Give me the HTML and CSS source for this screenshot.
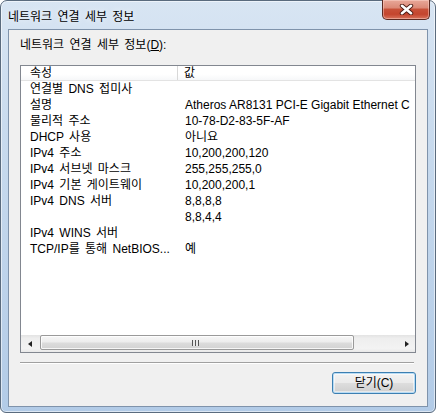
FILE: index.html
```html
<!DOCTYPE html>
<html lang="ko">
<head>
<meta charset="utf-8">
<title>네트워크 연결 세부 정보</title>
<link rel="stylesheet" href="styles.css">
</head>
<body>
<div class="window">
  <div class="titlebar">
    <span class="title">네트워크 연결 세부 정보</span>
    <div class="close-btn">
      <svg width="15" height="11" viewBox="0 0 15 11">
        <path d="M3 1.8 L12 9.2 M12 1.8 L3 9.2" stroke="#4a1a12" stroke-width="4.4" stroke-linecap="round" fill="none"/>
        <path d="M3 1.8 L12 9.2 M12 1.8 L3 9.2" stroke="#ffffff" stroke-width="2.6" stroke-linecap="round" fill="none"/>
      </svg>
    </div>
  </div>
  <div class="client">
    <div class="label">네트워크 연결 세부 정보(<u>D</u>):</div>
    <div class="listbox">
      <div class="lv-header">
        <div class="hcol hcol1">속성</div>
        <div class="hcol hcol2">값</div>
      </div>
      <div class="lv-body">
        <div class="row"><span class="c1">연결별 DNS 접미사</span><span class="c2"></span></div>
        <div class="row"><span class="c1">설명</span><span class="c2">Atheros AR8131 PCI-E Gigabit Ethernet C</span></div>
        <div class="row"><span class="c1">물리적 주소</span><span class="c2">10-78-D2-83-5F-AF</span></div>
        <div class="row"><span class="c1">DHCP 사용</span><span class="c2">아니요</span></div>
        <div class="row"><span class="c1">IPv4 주소</span><span class="c2">10,200,200,120</span></div>
        <div class="row"><span class="c1">IPv4 서브넷 마스크</span><span class="c2">255,255,255,0</span></div>
        <div class="row"><span class="c1">IPv4 기본 게이트웨이</span><span class="c2">10,200,200,1</span></div>
        <div class="row"><span class="c1">IPv4 DNS 서버</span><span class="c2">8,8,8,8</span></div>
        <div class="row"><span class="c1"></span><span class="c2">8,8,4,4</span></div>
        <div class="row"><span class="c1">IPv4 WINS 서버</span><span class="c2"></span></div>
        <div class="row"><span class="c1">TCP/IP를 통해 NetBIOS...</span><span class="c2">예</span></div>
      </div>
      <div class="hscroll">
        <div class="arrow-btn"><span class="tri tri-left"></span></div>
        <div class="track">
          <div class="thumb"><span class="grip"></span></div>
        </div>
        <div class="arrow-btn"><span class="tri tri-right"></span></div>
      </div>
    </div>
    <div class="separator"></div>
    <div class="button-row">
      <div class="btn">닫기(C)</div>
    </div>
  </div>
</div>
</body>
</html>
```

FILE: styles.css
```css
* { box-sizing: border-box; }
html, body { margin: 0; padding: 0; }
body {
  width: 436px;
  height: 413px;
  overflow: hidden;
  background: #ffffff;
  font-family: "Liberation Sans", "Noto Sans CJK KR", sans-serif;
  font-size: 12px;
  color: #000;
}

.window {
  width: 436px;
  height: 413px;
  border: 1px solid #5a6b7e;
  border-radius: 7px 7px 6px 6px;
  background: linear-gradient(to bottom, #d8e5f3 0%, #c9dbee 30%, #bcd2ea 70%, #b2cbe7 100%);
  box-shadow: inset 0 0 0 1px rgba(255, 255, 255, 0.55);
  padding: 0 7px 5px 7px;
  display: flex;
  flex-direction: column;
}

.titlebar {
  height: 28px;
  display: flex;
  align-items: flex-start;
}
.title {
  padding-top: 8px;
  line-height: 16px;
  font-size: 12px;
  word-spacing: 2px;
  color: #000;
  text-shadow: 0 0 6px rgba(255, 255, 255, 0.9);
}
.close-btn {
  margin-left: auto;
  margin-top: -1px;
  margin-right: -2px;
  width: 48px;
  height: 20px;
  border: 1px solid #5b2a22;
  border-top: none;
  border-radius: 0 0 5px 5px;
  background: linear-gradient(to bottom, #e8a899 0%, #dc8a78 40%, #c75038 50%, #c4452e 75%, #d8735c 100%);
  box-shadow: inset 0 0 0 1px rgba(255, 220, 210, 0.45);
  display: flex;
  align-items: center;
  justify-content: center;
}

.client {
  height: 378px;
  border: 1px solid #7f93ab;
  background: #f0f0f0;
  display: flex;
  flex-direction: column;
}

.label {
  margin: 7px 0 0 11px;
  line-height: 16px;
  height: 16px;
  word-spacing: 2px;
}
.label u { text-decoration: underline; text-underline-offset: 1px; }

.listbox {
  margin: 12px 0 0 11px;
  width: 396px;
  height: 288px;
  border: 1px solid #828790;
  background: #ffffff;
  display: flex;
  flex-direction: column;
  overflow: hidden;
}

.lv-header {
  height: 15px;
  flex: none;
  display: flex;
  border-bottom: 1px solid #e3e3e3;
  background: linear-gradient(to bottom, #ffffff 0%, #ffffff 60%, #f6f7f9 100%);
}
.hcol {
  line-height: 14px;
  white-space: nowrap;
}
.hcol1 {
  width: 157px;
  padding-left: 9px;
  border-right: 1px solid #d8d8d8;
}
.hcol2 {
  padding-left: 6px;
}

.lv-body {
  flex: 1;
  overflow: hidden;
}
.row {
  height: 16px;
  line-height: 16px;
  display: flex;
  white-space: nowrap;
  word-spacing: 2px;
}
.c1 {
  width: 157px;
  flex: none;
  padding-left: 9px;
  padding-right: 4px;
  overflow: hidden;
}
.c2 {
  flex: none;
  padding-left: 7px;
  word-spacing: 0;
}

.hscroll {
  height: 17px;
  flex: none;
  display: flex;
  background: linear-gradient(to bottom, #e3e3e3 0%, #eeeeee 20%, #f3f3f3 80%, #e8e8e8 100%);
}
.arrow-btn {
  width: 17px;
  height: 17px;
  flex: none;
  display: flex;
  align-items: center;
  justify-content: center;
}
.tri {
  width: 0;
  height: 0;
  border-top: 3.5px solid transparent;
  border-bottom: 3.5px solid transparent;
}
.tri-left { border-right: 4px solid #222; margin-left: 1px; }
.tri-right { border-left: 4px solid #222; margin-left: 1px; }

.track {
  flex: 1;
  padding: 0 44px 0 2px;
  display: flex;
  align-items: flex-start;
}
.thumb {
  width: 314px;
  height: 15px;
  border: 1px solid #9a9a9a;
  border-radius: 2px;
  background: linear-gradient(to bottom, #f7f7f7 0%, #ededed 45%, #dcdcdc 55%, #d2d2d2 100%);
  box-shadow: inset 0 0 0 1px rgba(255, 255, 255, 0.8);
  display: flex;
  align-items: center;
  justify-content: center;
}
.grip {
  width: 7px;
  height: 6px;
  margin-left: -4px;
  background: linear-gradient(to right, #555 0 1px, #e8e8e8 1px 3px, #555 3px 4px, #e8e8e8 4px 6px, #555 6px 7px);
}

.separator {
  margin: 9px 0 0 11px;
  width: 394px;
  height: 2px;
  border-top: 1px solid #a0a0a0;
  border-bottom: 1px solid #ffffff;
}

.button-row {
  margin-top: 8px;
  display: flex;
  justify-content: flex-end;
  padding-right: 11px;
}
.btn {
  width: 84px;
  height: 22px;
  border: 1px solid #3c7fb1;
  border-radius: 3px;
  background: linear-gradient(to bottom, #f2f2f2 0%, #ebebeb 48%, #dddddd 52%, #cfcfcf 100%);
  box-shadow: inset 0 0 0 1px #b8dcf5, inset 0 0 0 2px rgba(255, 255, 255, 0.5);
  text-align: center;
  line-height: 20px;
  font-size: 12px;
}
```
